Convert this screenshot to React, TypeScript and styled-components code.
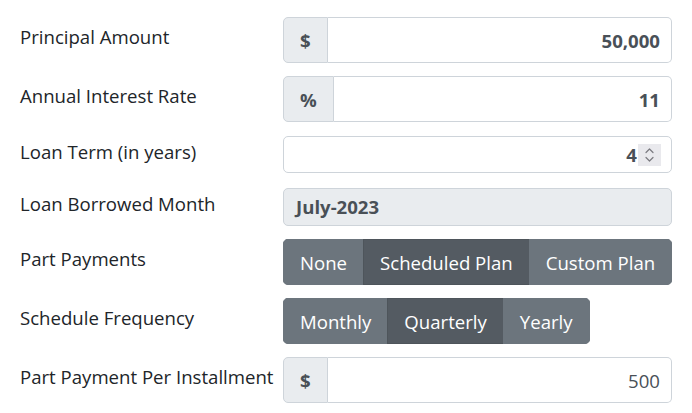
import React from "react";
import styled, { createGlobalStyle } from "styled-components";

const GlobalStyle = createGlobalStyle`
  html, body { margin: 0; padding: 0; background: #ffffff; }
  body {
    font-family: "Open Sans", "Noto Sans", sans-serif;
    color: #212529;
  }
  * { box-sizing: border-box; }
`;

const FS = "18.6px";

const Form = styled.form`
  display: flex;
  flex-direction: column;
  gap: 13px;
  width: 692px;
  padding: 17px 20px 0 20px;
`;

const Row = styled.div`
  display: grid;
  grid-template-columns: 263px 1fr;
  align-items: center;
  min-height: 39px;
`;

const Label = styled.label`
  font-size: ${FS};
  line-height: 28px;
  margin-bottom: 6px;
  white-space: nowrap;
  color: #212529;
`;

const InputGroup = styled.div`
  display: flex;
  height: 46px;
`;

const Addon = styled.span`
  display: flex;
  align-items: center;
  padding: 0 16px;
  background: #e9ecef;
  border: 1px solid #ced4da;
  border-radius: 5px 0 0 5px;
  font-size: ${FS};
  font-weight: 700;
  color: #495057;
`;

const ValueInput = styled.input<{ $bold?: boolean }>`
  flex: 1;
  min-width: 0;
  height: 100%;
  border: 1px solid #ced4da;
  border-left: none;
  border-radius: 0 5px 5px 0;
  background: #ffffff;
  padding: 0 11px;
  text-align: right;
  font-family: inherit;
  font-size: ${FS};
  font-weight: ${(p) => (p.$bold ? 700 : 400)};
  color: #495057;
  outline: none;
`;

const NumberBox = styled.div`
  display: flex;
  align-items: center;
  justify-content: flex-end;
  height: 37px;
  border: 1px solid #ced4da;
  border-radius: 5px;
  background: #ffffff;
  padding: 0 10px 0 12px;
`;

const NumberValue = styled.span`
  font-size: ${FS};
  font-weight: 700;
  color: #495057;
  margin-right: 1px;
`;

const Spinner = styled.span`
  display: flex;
  width: 23px;
  height: 22px;
  background: #e9e9ed;
`;

const ReadonlyField = styled.div`
  display: flex;
  align-items: center;
  height: 38px;
  padding: 0 12px;
  background: #e9ecef;
  border: 1px solid #ced4da;
  border-radius: 5px;
  font-size: ${FS};
  font-weight: 700;
  color: #495057;
`;

const ButtonGroup = styled.div<{ $fill?: boolean }>`
  display: flex;
  width: ${(p) => (p.$fill ? "100%" : "fit-content")};
  height: 46px;
  border-radius: 5px;
  overflow: hidden;
`;

const SegButton = styled.button<{ $active?: boolean }>`
  flex: 1 1 auto;
  padding: 0 16px;
  border: 1px solid ${(p) => (p.$active ? "#4e555b" : "#6c757d")};
  background: ${(p) => (p.$active ? "#545b62" : "#6c757d")};
  color: #ffffff;
  font-family: inherit;
  font-size: ${FS};
  white-space: nowrap;
  cursor: pointer;
  & + & { margin-left: -1px; }
`;

const SpinIcon = () => (
  <svg width="23" height="22" viewBox="0 0 23 22" fill="none">
    <path d="M8 8.5 L11.5 5 L15 8.5" stroke="#7a7a80" strokeWidth="1.2" strokeLinecap="round" strokeLinejoin="round" />
    <path d="M8 13.5 L11.5 17 L15 13.5" stroke="#7a7a80" strokeWidth="1.2" strokeLinecap="round" strokeLinejoin="round" />
  </svg>
);

export default function App() {
  return (
    <>
      <GlobalStyle />
      <Form onSubmit={(e) => e.preventDefault()}>
        <Row>
          <Label>Principal Amount</Label>
          <InputGroup>
            <Addon>$</Addon>
            <ValueInput $bold defaultValue="50,000" />
          </InputGroup>
        </Row>
        <Row>
          <Label>Annual Interest Rate</Label>
          <InputGroup>
            <Addon>%</Addon>
            <ValueInput $bold defaultValue="11" />
          </InputGroup>
        </Row>
        <Row>
          <Label>Loan Term (in years)</Label>
          <NumberBox>
            <NumberValue>4</NumberValue>
            <Spinner>
              <SpinIcon />
            </Spinner>
          </NumberBox>
        </Row>
        <Row>
          <Label>Loan Borrowed Month</Label>
          <ReadonlyField>July-2023</ReadonlyField>
        </Row>
        <Row>
          <Label>Part Payments</Label>
          <ButtonGroup $fill>
            <SegButton type="button">None</SegButton>
            <SegButton type="button" $active>Scheduled Plan</SegButton>
            <SegButton type="button">Custom Plan</SegButton>
          </ButtonGroup>
        </Row>
        <Row>
          <Label>Schedule Frequency</Label>
          <ButtonGroup>
            <SegButton type="button">Monthly</SegButton>
            <SegButton type="button" $active>Quarterly</SegButton>
            <SegButton type="button">Yearly</SegButton>
          </ButtonGroup>
        </Row>
        <Row>
          <Label>Part Payment Per Installment</Label>
          <InputGroup>
            <Addon>$</Addon>
            <ValueInput defaultValue="500" />
          </InputGroup>
        </Row>
      </Form>
    </>
  );
}
